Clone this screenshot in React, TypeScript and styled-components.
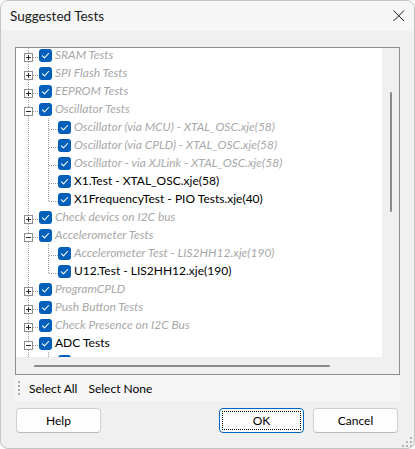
import React from 'react';
import styled, { createGlobalStyle } from 'styled-components';

const GlobalStyle = createGlobalStyle`
  html, body { margin: 0; padding: 0; background: #fafafa; }
  body { font-family: Lato, "Liberation Sans", sans-serif; font-size: 12px; color: #000; }
  #root { width: 415px; height: 449px; }
`;

const Window = styled.div`
  position: relative;
  width: 415px;
  height: 449px;
  box-sizing: border-box;
  border: 1px solid #c4c4c4;
  border-radius: 8px;
  overflow: hidden;
  background: #f0f0f0;
  display: flex;
  flex-direction: column;
`;

const TitleBar = styled.div`
  height: 30px;
  flex: none;
  display: flex;
  align-items: center;
  justify-content: space-between;
  padding: 0 9px 0 9px;
  background: #f6f6f6;
`;

const Title = styled.span`
  font-size: 13.5px;
  color: #1a1a1a;
`;

const CloseIcon = styled.svg`
  display: block;
`;

const Body = styled.div`
  flex: 1;
  display: flex;
  flex-direction: column;
  padding: 16px 14px 0 14px;
`;

const Panel = styled.div`
  flex: none;
  border: 1px solid #8e8e8e;
  display: grid;
  grid-template-columns: 366px 17px;
  grid-template-rows: 309px 17px;
  background: #f0f0f0;
`;

const Viewport = styled.div`
  background: #fff;
  overflow: hidden;
`;

const TreeList = styled.div`
  margin-top: -2px;
  display: flex;
  flex-direction: column;
`;

const Row = styled.div`
  height: 18px;
  display: flex;
  align-items: flex-start;
  white-space: nowrap;
`;

const Svg = styled.svg`
  flex: none;
  display: block;
`;

const CheckBox = styled.svg`
  flex: none;
  display: block;
  margin-top: 3px;
`;

const Label = styled.span<{ $enabled: boolean }>`
  margin-left: 3px;
  line-height: 18px;
  font-size: 12px;
  font-style: ${(p) => (p.$enabled ? 'normal' : 'italic')};
  color: ${(p) => (p.$enabled ? '#000' : '#a8a8a8')};
`;

const VTrack = styled.div`
  background: #f0f0f0;
  display: flex;
  justify-content: center;
`;

const VThumb = styled.div`
  width: 2px;
  height: 120px;
  margin-top: 44px;
  margin-left: 1px;
  border-radius: 1px;
  background: #8a8a8a;
`;

const HTrack = styled.div`
  background: #f0f0f0;
`;

const HThumb = styled.div`
  height: 2px;
  width: 296px;
  margin-top: 8px;
  margin-left: 18px;
  border-radius: 1px;
  background: #8a8a8a;
`;

const Corner = styled.div`
  background: #f0f0f0;
`;

const Toolbar = styled.div`
  height: 26px;
  flex: none;
  display: flex;
  align-items: center;
  background: #f6f6f6;
  padding-left: 3px;
`;

const Grip = styled.svg`
  display: block;
  margin-right: 9px;
`;

const ToolButton = styled.span`
  font-size: 12px;
  color: #000;
  margin-right: 11px;
`;

const Footer = styled.div`
  display: flex;
  align-items: center;
  margin: 7px 2px 0 1px;
  gap: 9px;
`;

const Spacer = styled.div`
  flex: 1;
`;

const Button = styled.button<{ $default?: boolean }>`
  width: 85px;
  height: 25px;
  box-sizing: border-box;
  border-radius: 4px;
  border: 1px solid ${(p) => (p.$default ? '#0067c0' : '#d0d0d0')};
  border-bottom-color: ${(p) => (p.$default ? '#0067c0' : '#bcbcbc')};
  background: #fdfdfd;
  font-family: Lato, "Liberation Sans", sans-serif;
  font-size: 12px;
  color: #000;
  padding: 0;
  display: flex;
  align-items: center;
  justify-content: center;
`;

const FocusRect = styled.span`
  box-sizing: border-box;
  width: 79px;
  height: 19px;
  border: 1px dotted #000;
  display: flex;
  align-items: center;
  justify-content: center;
`;

const ResizeGrip = styled.svg`
  position: absolute;
  right: 2px;
  bottom: 1px;
  display: block;
`;

type Node = { label: string; enabled?: boolean; expanded?: boolean; children?: Node[] };

const tree: Node[] = [
  { label: 'SRAM Tests', children: [] },
  { label: 'SPI Flash Tests', children: [] },
  { label: 'EEPROM Tests', children: [] },
  {
    label: 'Oscillator Tests',
    expanded: true,
    children: [
      { label: 'Oscillator (via MCU) - XTAL_OSC.xje(58)' },
      { label: 'Oscillator (via CPLD) - XTAL_OSC.xje(58)' },
      { label: 'Oscillator - via XJLink - XTAL_OSC.xje(58)' },
      { label: 'X1.Test - XTAL_OSC.xje(58)', enabled: true },
      { label: 'X1FrequencyTest - PIO Tests.xje(40)', enabled: true },
    ],
  },
  { label: 'Check devics on I2C bus', children: [] },
  {
    label: 'Accelerometer Tests',
    expanded: true,
    children: [
      { label: 'Accelerometer Test - LIS2HH12.xje(190)' },
      { label: 'U12.Test - LIS2HH12.xje(190)', enabled: true },
    ],
  },
  { label: 'ProgramCPLD', children: [] },
  { label: 'Push Button Tests', children: [] },
  { label: 'Check Presence on I2C Bus', children: [] },
  {
    label: 'ADC Tests',
    enabled: true,
    expanded: true,
    children: [{ label: '', enabled: true }],
  },
];

const LINE = '#a0a0a0';

const RootLead = ({ expandable, expanded }: { expandable: boolean; expanded: boolean }) => (
  <Svg width={23} height={18}>
    <line x1={12.5} y1={0} x2={12.5} y2={18} stroke={LINE} strokeDasharray="1 1" />
    <line x1={13} y1={11.5} x2={23} y2={11.5} stroke={LINE} strokeDasharray="1 1" />
    {expandable && (
      <>
        <rect x={8.5} y={7.5} width={8} height={8} fill="#fff" stroke="#8e8e8e" />
        <line x1={10} y1={11.5} x2={15} y2={11.5} stroke="#2b2b2b" />
        {!expanded && <line x1={12.5} y1={9} x2={12.5} y2={14} stroke="#2b2b2b" />}
      </>
    )}
  </Svg>
);

const PassLead = () => (
  <Svg width={23} height={18}>
    <line x1={12.5} y1={0} x2={12.5} y2={18} stroke={LINE} strokeDasharray="1 1" />
  </Svg>
);

const ChildLead = ({ last }: { last: boolean }) => (
  <Svg width={19} height={18}>
    <line x1={9.5} y1={0} x2={9.5} y2={last ? 12 : 18} stroke={LINE} strokeDasharray="1 1" />
    <line x1={10} y1={11.5} x2={19} y2={11.5} stroke={LINE} strokeDasharray="1 1" />
  </Svg>
);

const Check = () => (
  <CheckBox width={13} height={13} viewBox="0 0 13 13">
    <rect x={0} y={0} width={13} height={13} rx={3} fill="#005fb8" />
    <path d="M3.4 6.9 L5.5 8.9 L9.6 4.5" fill="none" stroke="#fff" strokeWidth={1.1} strokeLinecap="round" strokeLinejoin="round" />
  </CheckBox>
);

export default function App() {
  const rows: React.ReactNode[] = [];
  tree.forEach((n, i) => {
    const expandable = !!n.children;
    rows.push(
      <Row key={`r${i}`}>
        <RootLead expandable={expandable} expanded={!!n.expanded} />
        <Check />
        <Label $enabled={!!n.enabled}>{n.label}</Label>
      </Row>
    );
    if (n.expanded && n.children) {
      n.children.forEach((c, j) => {
        rows.push(
          <Row key={`r${i}-${j}`}>
            <PassLead />
            <ChildLead last={c.label !== '' && j === n.children!.length - 1} />
            <Check />
            {c.label && <Label $enabled={!!c.enabled}>{c.label}</Label>}
          </Row>
        );
      });
    }
  });

  return (
    <>
      <GlobalStyle />
      <Window>
        <TitleBar>
          <Title>Suggested Tests</Title>
          <CloseIcon width={12} height={12} viewBox="0 0 12 12">
            <path d="M0.5 0.5 L11 11 M11 0.5 L0.5 11" stroke="#1a1a1a" strokeWidth={1} />
          </CloseIcon>
        </TitleBar>
        <Body>
          <Panel>
            <Viewport>
              <TreeList>{rows}</TreeList>
            </Viewport>
            <VTrack>
              <VThumb />
            </VTrack>
            <HTrack>
              <HThumb />
            </HTrack>
            <Corner />
          </Panel>
          <Toolbar>
            <Grip width={2} height={15} viewBox="0 0 2 15">
              {[0, 4, 8, 12].map((y) => (
                <rect key={y} x={0} y={y} width={2} height={2} fill="#a8a8a8" />
              ))}
            </Grip>
            <ToolButton>Select All</ToolButton>
            <ToolButton>Select None</ToolButton>
          </Toolbar>
          <Footer>
            <Button>Help</Button>
            <Spacer />
            <Button $default>
              <FocusRect>OK</FocusRect>
            </Button>
            <Button>Cancel</Button>
          </Footer>
        </Body>
        <ResizeGrip width={10} height={10} viewBox="0 0 10 10">
          <rect x={8} y={0} width={2} height={2} fill="#b4b4b4" />
          <rect x={4} y={4} width={2} height={2} fill="#b4b4b4" />
          <rect x={8} y={4} width={2} height={2} fill="#b4b4b4" />
          <rect x={0} y={8} width={2} height={2} fill="#b4b4b4" />
          <rect x={4} y={8} width={2} height={2} fill="#b4b4b4" />
          <rect x={8} y={8} width={2} height={2} fill="#b4b4b4" />
        </ResizeGrip>
      </Window>
    </>
  );
}
